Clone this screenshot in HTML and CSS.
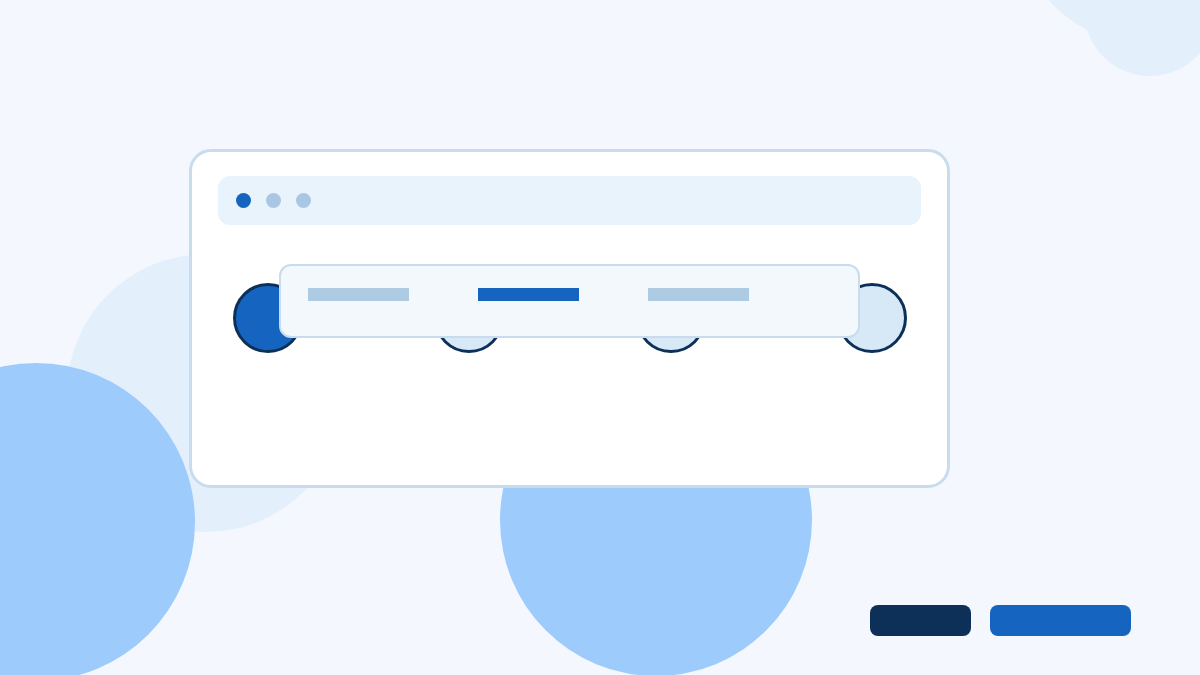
FILE: index.html
```html
<!DOCTYPE html>
<html>
<head>
<meta charset="utf-8">
<link rel="stylesheet" href="styles.css">
</head>
<body>
<div class="page">
  <div class="blob blob-tr1"></div>
  <div class="blob blob-tr2"></div>
  <div class="blob blob-left-light"></div>
  <div class="blob blob-left-blue"></div>
  <div class="blob blob-center-blue"></div>

  <div class="card">
    <div class="titlebar">
      <span class="dot dot-active"></span>
      <span class="dot"></span>
      <span class="dot"></span>
    </div>
    <div class="steps">
      <span class="step step-active"></span>
      <span class="step"></span>
      <span class="step"></span>
      <span class="step"></span>
    </div>
    <div class="tabs">
      <span class="tab"></span>
      <span class="tab tab-active"></span>
      <span class="tab"></span>
    </div>
  </div>

  <div class="actions">
    <span class="btn btn-dark"></span>
    <span class="btn btn-primary"></span>
  </div>
</div>
</body>
</html>
```
FILE: styles.css
```css
html, body {
  margin: 0;
  padding: 0;
}
body {
  font-family: "Liberation Sans", Arial, sans-serif;
  background: #f4f8fe;
}
.page {
  position: relative;
  width: 1200px;
  height: 675px;
  overflow: hidden;
  background: #f4f8fe;
  box-sizing: border-box;
  padding: 149px 69px 39px 189px;
  display: flex;
  flex-direction: column;
}
.blob {
  position: absolute;
  border-radius: 50%;
}
.blob-tr1 {
  left: 1012px;
  top: -237px;
  width: 284px;
  height: 284px;
  background: #e3f0fc;
}
.blob-tr2 {
  left: 1084px;
  top: -56px;
  width: 132px;
  height: 132px;
  background: #e3f0fc;
}
.blob-left-light {
  left: 67px;
  top: 254px;
  width: 278px;
  height: 278px;
  background: #e3f0fc;
}
.blob-left-blue {
  left: -123px;
  top: 363px;
  width: 318px;
  height: 318px;
  background: #9ccbfc;
}
.blob-center-blue {
  left: 500px;
  top: 364px;
  width: 312px;
  height: 312px;
  background: #9ccbfc;
}
.card {
  position: relative;
  z-index: 1;
  width: 761px;
  height: 339px;
  box-sizing: border-box;
  border: 3px solid #c9dcee;
  border-radius: 22px;
  background: #ffffff;
  padding: 24px 26px;
}
.titlebar {
  height: 49px;
  border-radius: 12px;
  background: #e8f3fc;
  display: flex;
  align-items: center;
  gap: 15px;
  padding-left: 18px;
}
.dot {
  width: 15px;
  height: 15px;
  border-radius: 50%;
  background: #a9c7e3;
}
.dot-active {
  background: #1565c0;
}
.steps {
  margin-top: 58px;
  padding: 0 14px 0 15px;
  display: flex;
  justify-content: space-between;
}
.step {
  width: 70px;
  height: 70px;
  box-sizing: border-box;
  border-radius: 50%;
  border: 3px solid #0d3058;
  background: #d7e9f7;
}
.step-active {
  background: #1565c0;
}
.tabs {
  position: absolute;
  left: 87px;
  top: 112px;
  width: 581px;
  height: 74px;
  box-sizing: border-box;
  border: 2px solid #c8dcee;
  border-radius: 12px;
  background: #f3f8fd;
  padding: 22px 27px;
  display: flex;
  gap: 69px;
}
.tab {
  width: 101px;
  height: 13px;
  background: #aecbe4;
}
.tab-active {
  background: #1565c0;
}
.actions {
  position: relative;
  z-index: 1;
  margin-top: auto;
  display: flex;
  justify-content: flex-end;
  gap: 19px;
}
.btn {
  height: 31px;
  border-radius: 8px;
}
.btn-dark {
  width: 101px;
  background: #0d3058;
}
.btn-primary {
  width: 141px;
  background: #1565c0;
}
```
